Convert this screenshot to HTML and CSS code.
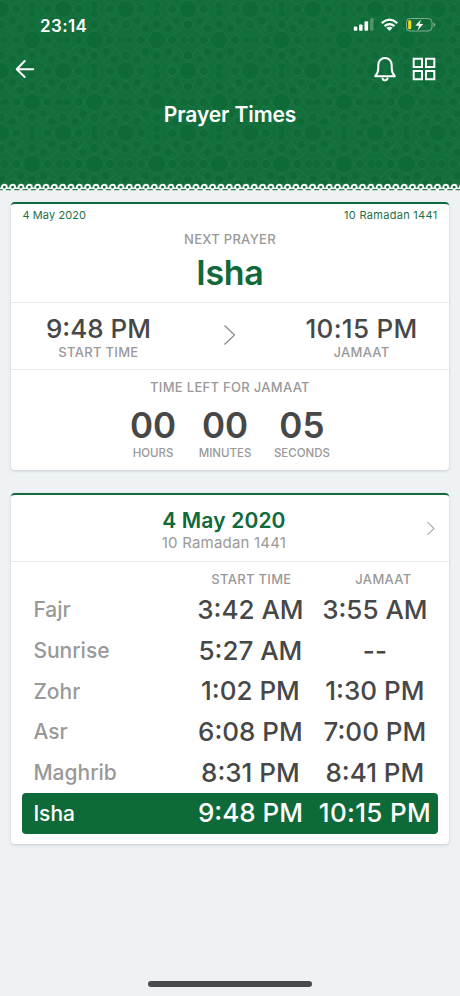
FILE: index.html
```html
<!DOCTYPE html>
<html lang="en">
<head>
<meta charset="utf-8">
<title>Prayer Times</title>
<link rel="stylesheet" href="styles.css">
</head>
<body>
<header class="header">
  <svg class="pattern" width="460" height="191" aria-hidden="true">
    <defs>
      <g id="rosette" class="rosette">
        <path d="M-9-22 0-9 9-22M-9 22 0 9 9 22M-22-9-9 0-22 9M22-9 9 0 22 9M-22-9-9-22M9-22 22-9M22 9 9 22M-9 22-22 9"/>
        <circle r="9"/>
        <circle cx="15.600" r="4.800"/><circle cx="-15.600" r="4.800"/>
        <circle cy="15.600" r="4.800"/><circle cy="-15.600" r="4.800"/>
        <circle cx="11.500" cy="11.500" r="4.600"/><circle cx="-11.500" cy="11.500" r="4.600"/>
        <circle cx="11.500" cy="-11.500" r="4.600"/><circle cx="-11.500" cy="-11.500" r="4.600"/>
      </g>
      <pattern id="tile" x="0.800" y="9" width="62.400" height="62" patternUnits="userSpaceOnUse">
        <g class="rosette">
          <use href="#rosette" x="31.200" y="31"/>
          <use href="#rosette"/><use href="#rosette" x="62.400"/>
          <use href="#rosette" y="62"/><use href="#rosette" x="62.400" y="62"/>
          <circle cx="31.200" cy="4" r="4.500"/><circle cx="31.200" cy="58" r="4.500"/>
          <circle cx="4" cy="31" r="4.500"/><circle cx="58.400" cy="31" r="4.500"/>
        </g>
      </pattern>
      <pattern id="lace" x="0.150" y="183" width="8.330" height="8" patternUnits="userSpaceOnUse">
        <path class="lace-link" d="M0 5.300h8.330"/>
        <circle class="lace-ring" cx="4.160" cy="4.100" r="2.400"/>
        <path class="lace-gap" d="M0 6.600h2.600M5.700 6.600h2.630"/>
      </pattern>
    </defs>
    <rect width="460" height="185" fill="url(#tile)"/>
    <rect y="183" width="460" height="8" fill="url(#lace)"/>
  </svg>
  <div class="status">
    <span class="clock">23:14</span>
    <svg class="status-icons" width="84" height="16" viewBox="0 0 84 16" aria-hidden="true">
      <g fill="#fff">
        <rect x="0.700" y="9.500" width="3.600" height="4.300" rx="1"/>
        <rect x="6" y="7.500" width="3.600" height="6.300" rx="1"/>
        <rect x="11.500" y="4.300" width="3.600" height="9.500" rx="1"/>
        <rect x="17" y="1.300" width="3.600" height="12.500" rx="1" opacity=".25"/>
        <path d="M33.400 10.800q3.100-2.200 6.200 0l-3.100 3.200z"/>
      </g>
      <g fill="none" stroke="#fff" stroke-width="2.200">
        <path d="M28.700 6.100q7.800-6.800 15.600 0"/>
        <path d="M31.500 9.200q5-4 10 0"/>
      </g>
      <rect x="53.500" y="1.500" width="25.500" height="12.500" rx="3.800" fill="none" stroke="#fff" stroke-opacity=".45"/>
      <path d="M80.500 5.700q2 .6 2 2t-2 2z" fill="#fff" opacity=".45"/>
      <rect x="55.200" y="3.300" width="3" height="9" rx="1.300" fill="#f5dd1c"/>
      <path d="M67.800 2.800l-5.400 6h3.600l-1.400 4.700 5.600-6.400h-3.500z" fill="#fff"/>
    </svg>
  </div>
  <div class="toolbar">
    <svg width="20" height="20" viewBox="0 0 20 20" fill="none" stroke="#fff" stroke-width="2" stroke-linecap="round" stroke-linejoin="round" aria-hidden="true"><path d="M18.200 10.300H2M9.700 2 1.700 10.300l8 7.700"/></svg>
    <div class="actions">
      <svg width="24" height="26" viewBox="0 0 24 26" fill="none" stroke="#fff" stroke-width="2" stroke-linejoin="round" aria-hidden="true"><path d="M2.200 20.300c2.200-2.400 3.100-4.600 3.100-8V9.100C5.300 5 8.100 2 12 2s6.700 3 6.700 7.100v3.200c0 3.400.9 5.600 3.100 8z"/><path d="M9.500 22.500c.3 1.200 1.300 1.900 2.500 1.900s2.200-.7 2.500-1.900" stroke-linecap="round"/></svg>
      <svg width="24" height="24" viewBox="0 0 24 24" fill="none" stroke="#fff" stroke-width="2" aria-hidden="true"><path d="M1.700 1.700h8.300v8.300H1.700zM14 1.700h8.300v8.300H14zM1.700 14h8.300v8.300H1.700zM14 14h8.300v8.300H14z"/></svg>
    </div>
  </div>
  <h1 class="title">Prayer Times</h1>
</header>

<main class="content">
  <section class="card next">
    <div class="dates"><span>4 May 2020</span><span class="hijri-small">10 Ramadan 1441</span></div>
    <div class="next-name">
      <div class="label">NEXT PRAYER</div>
      <div class="prayer">Isha</div>
    </div>
    <div class="span">
      <div class="slot"><div class="time">9:48 PM</div><div class="label">START TIME</div></div>
      <svg class="chevron" width="14" height="22" viewBox="0 0 14 22" fill="none" stroke="#888" stroke-width="1.200" aria-hidden="true"><path d="M1.500 1.500 11.500 11 1.500 20.500"/></svg>
      <div class="slot"><div class="time wide">10:15 PM</div><div class="label">JAMAAT</div></div>
    </div>
    <div class="left">
      <div class="label">TIME LEFT FOR JAMAAT</div>
      <div class="counter">
        <div class="unit"><b>00</b><span>HOURS</span></div>
        <div class="unit"><b>00</b><span>MINUTES</span></div>
        <div class="unit"><b>05</b><span>SECONDS</span></div>
      </div>
    </div>
  </section>

  <section class="card day">
    <div class="day-head">
      <div class="day-date">4 May 2020</div>
      <div class="day-hijri">10 Ramadan 1441</div>
      <svg class="day-next" width="10" height="15" viewBox="0 0 10 15" fill="none" stroke="#aaa" stroke-width="1.100" aria-hidden="true"><path d="M1.500 1.200 8 7.500 1.500 13.800"/></svg>
    </div>
    <div class="row columns"><span></span><span class="label">START TIME</span><span class="label jamaat">JAMAAT</span></div>
    <div class="row"><span class="name">Fajr</span><span class="time">3:42 AM</span><span class="time">3:55 AM</span></div>
    <div class="row"><span class="name">Sunrise</span><span class="time">5:27 AM</span><span class="time">--</span></div>
    <div class="row"><span class="name">Zohr</span><span class="time">1:02 PM</span><span class="time">1:30 PM</span></div>
    <div class="row"><span class="name">Asr</span><span class="time">6:08 PM</span><span class="time">7:00 PM</span></div>
    <div class="row"><span class="name">Maghrib</span><span class="time">8:31 PM</span><span class="time">8:41 PM</span></div>
    <div class="row current"><span class="name">Isha</span><span class="time">9:48 PM</span><span class="time wide">10:15 PM</span></div>
  </section>
</main>
<div class="home-bar"></div>
</body>
</html>
```
FILE: styles.css
```css
* { box-sizing: border-box; }
body {
  margin: 0;
  width: 460px;
  height: 996px;
  overflow: hidden;
  display: flex;
  flex-direction: column;
  background: #eef2f5;
  color: #474747;
  font-family: Inter, "Liberation Sans", sans-serif;
  white-space: nowrap;
}

.header { position: relative; height: 191px; color: #fff; background: linear-gradient(#126e3b 188px, #eef2f5 188px); }
.pattern { position: absolute; inset: 0; }
.rosette { fill: none; stroke: #187441; stroke-width: 1; }
.rosette circle { fill: #0e6b38; }
.lace-gap { stroke: #2b7d51; stroke-width: 1.2; }
.lace-ring { fill: #0d6335; stroke: #fff; stroke-width: 1.9; }
.lace-link { stroke: #fff; stroke-width: 1.5; }

.status { position: relative; height: 50px; padding: 2px 23px 0 40px; display: flex; justify-content: space-between; align-items: center; }
.clock { font-size: 17px; font-weight: 600; letter-spacing: .4px; }
.status-icons { margin-top: -2px; }
.toolbar { position: relative; height: 38px; padding: 0 24px 0 15px; display: flex; align-items: center; justify-content: space-between; }
.actions { display: flex; align-items: center; gap: 15px; }
.title { position: relative; margin: 14px 0 0; text-align: center; font-size: 21px; line-height: 26px; font-weight: 600; letter-spacing: -.1px; }

.content { padding: 10.500px 11.500px 0 11.400px; display: flex; flex-direction: column; gap: 22.500px; }
.card { background: #fff; border-top: 2.500px solid #12693f; border-radius: 4px; box-shadow: 0 1px 3px rgba(60, 70, 80, .22); }
.next { height: 268.500px; }
.dates { height: 22px; padding: 0 11px 0 11px; display: flex; justify-content: space-between; align-items: center; font-size: 11px; color: #1d7045; letter-spacing: .1px; }
.hijri-small { letter-spacing: .3px; }
.label { font-size: 13px; line-height: 16px; font-weight: 500; letter-spacing: .3px; color: #999; }
.next-name { height: 77px; padding-top: 5px; text-align: center; border-bottom: 1px solid #e9ebec; }
.prayer { font-size: 34px; line-height: 42px; margin-top: 5px; font-weight: 600; letter-spacing: -.3px; color: #0f693a; }
.span { height: 67px; padding-top: 3px; display: flex; justify-content: space-between; align-items: center; border-bottom: 1px solid #e9ebec; text-align: center; }
.chevron { margin-top: -4px; }
.slot { width: 174px; }
.time { font-size: 26px; line-height: 30px; font-weight: 500; }
.span .wide { letter-spacing: .3px; }
.left { padding-top: 9px; text-align: center; }
.counter { display: flex; justify-content: center; gap: 22.500px; padding-top: 11px; }
.unit { display: flex; flex-direction: column; min-width: 45.500px; }
.unit b { font-size: 35px; line-height: 38px; font-weight: 600; }
.unit span { font-size: 11.500px; line-height: 18px; font-weight: 500; color: #999; }

.day { height: 351.500px; }
.day-head { position: relative; height: 67px; padding: 12.500px 12px 0 0; text-align: center; border-bottom: 1px solid #e9ebec; margin-bottom: 9px; }
.day-date { font-size: 21px; line-height: 27px; font-weight: 600; letter-spacing: .15px; color: #0f693a; }
.day-hijri { font-size: 15px; line-height: 18px; letter-spacing: .2px; color: #999; }
.day-next { position: absolute; right: 13px; top: 26.500px; }
.row { height: 40.700px; margin: 0 11px 0 11px; padding-left: 11px; display: grid; grid-template-columns: 155px 124px 125px; align-items: center; text-align: center; border-radius: 4px; }
.columns { height: 19px; align-items: start; }
.columns .label { position: relative; left: 1px; }
.jamaat { padding-left: 15px; }
.name { font-size: 21px; font-weight: 500; color: #999; text-align: left; }
.current { background: #0e6a39; }
.current span { color: #fff; }
.current .wide { letter-spacing: .3px; }

.home-bar { width: 164px; height: 6px; border-radius: 3px; background: #47494b; margin: auto auto 9px; }
```
